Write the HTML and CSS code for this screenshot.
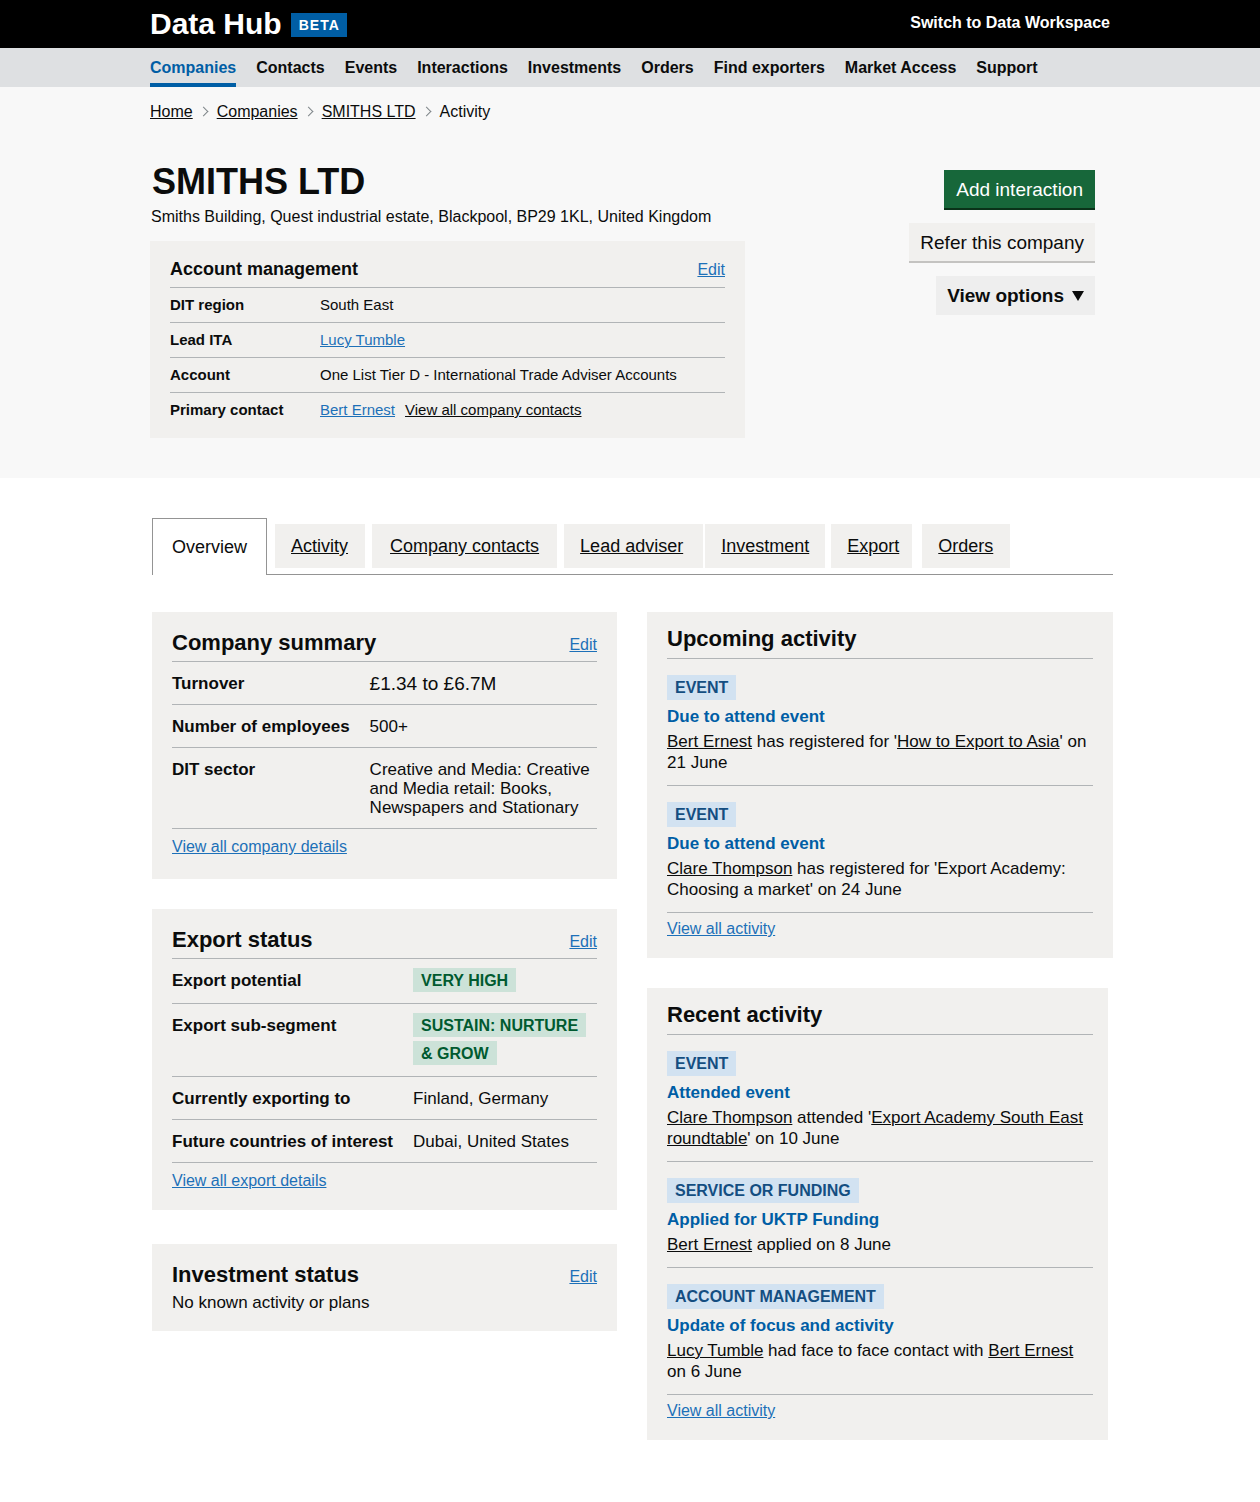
FILE: index.html
```html
<!DOCTYPE html>
<html lang="en">
<head>
<meta charset="utf-8">
<title>SMITHS LTD - Data Hub</title>
<link rel="stylesheet" href="styles.css">
</head>
<body>
<header class="site-header">
  <div class="container header-inner">
    <div class="brand"><span class="brand-name">Data Hub</span><span class="beta">BETA</span></div>
    <a class="switch" href="#">Switch to Data Workspace</a>
  </div>
</header>
<nav class="main-nav">
  <ul class="container nav-list">
    <li><a class="nav-link active" href="#">Companies</a></li>
    <li><a class="nav-link" href="#">Contacts</a></li>
    <li><a class="nav-link" href="#">Events</a></li>
    <li><a class="nav-link" href="#">Interactions</a></li>
    <li><a class="nav-link" href="#">Investments</a></li>
    <li><a class="nav-link" href="#">Orders</a></li>
    <li><a class="nav-link" href="#">Find exporters</a></li>
    <li><a class="nav-link" href="#">Market Access</a></li>
    <li><a class="nav-link" href="#">Support</a></li>
  </ul>
</nav>
<div class="local-header">
  <div class="container">
    <ol class="breadcrumbs">
      <li><a href="#">Home</a></li>
      <li><a href="#">Companies</a></li>
      <li><a href="#">SMITHS LTD</a></li>
      <li>Activity</li>
    </ol>
    <div class="company-head">
      <div class="company-info">
        <h1 class="company-name">SMITHS LTD</h1>
        <p class="address">Smiths Building, Quest industrial estate, Blackpool, BP29 1KL, United Kingdom</p>
        <section class="account-box">
          <div class="box-head"><h2>Account management</h2><a class="link" href="#">Edit</a></div>
          <table class="account-table">
            <tr><th>DIT region</th><td>South East</td></tr>
            <tr><th>Lead ITA</th><td><a class="link" href="#">Lucy Tumble</a></td></tr>
            <tr><th>Account</th><td>One List Tier D - International Trade Adviser Accounts</td></tr>
            <tr><th>Primary contact</th><td><a class="link" href="#">Bert Ernest</a><a class="plain-link contacts-link" href="#">View all company contacts</a></td></tr>
          </table>
        </section>
      </div>
      <div class="actions">
        <a class="btn btn-green" href="#">Add interaction</a>
        <a class="btn btn-grey" href="#">Refer this company</a>
        <button class="btn btn-options" type="button">View options <svg width="12" height="10" viewBox="0 0 12 10" aria-hidden="true"><path d="M0 0H12L6 10Z" fill="#0b0c0c"/></svg></button>
      </div>
    </div>
  </div>
</div>
<main class="container">
  <div class="main-inner">
    <ul class="tabs">
      <li class="tab selected">Overview</li>
      <li class="tab"><a href="#">Activity</a></li>
      <li class="tab"><a href="#">Company contacts</a></li>
      <li class="tab"><a href="#">Lead adviser</a></li>
      <li class="tab"><a href="#">Investment</a></li>
      <li class="tab"><a href="#">Export</a></li>
      <li class="tab"><a href="#">Orders</a></li>
    </ul>
    <div class="cards">
      <div class="col">
        <section class="card card-summary">
          <div class="card-head with-edit"><h2>Company summary</h2><a class="link" href="#">Edit</a></div>
          <table class="kv">
            <tr><th>Turnover</th><td class="big">£1.34 to £6.7M</td></tr>
            <tr><th>Number of employees</th><td>500+</td></tr>
            <tr><th>DIT sector</th><td>Creative and Media: Creative and Media retail: Books, Newspapers and Stationary</td></tr>
          </table>
          <p class="card-foot"><a class="link" href="#">View all company details</a></p>
        </section>
        <section class="card">
          <div class="card-head with-edit"><h2>Export status</h2><a class="link" href="#">Edit</a></div>
          <table class="kv">
            <tr><th>Export potential</th><td class="tags"><span class="tag-green">VERY HIGH</span></td></tr>
            <tr><th>Export sub-segment</th><td class="tags"><span class="tag-green">SUSTAIN: NURTURE &amp; GROW</span></td></tr>
            <tr><th>Currently exporting to</th><td>Finland, Germany</td></tr>
            <tr><th>Future countries of interest</th><td>Dubai, United States</td></tr>
          </table>
          <p class="card-foot"><a class="link" href="#">View all export details</a></p>
        </section>
        <section class="card card-invest">
          <div class="card-head with-edit no-line"><h2>Investment status</h2><a class="link" href="#">Edit</a></div>
          <p class="invest-text">No known activity or plans</p>
        </section>
      </div>
      <div class="col">
        <section class="card">
          <div class="card-head plain"><h2>Upcoming activity</h2></div>
          <div class="activity-item">
            <span class="tag-blue">EVENT</span>
            <h3 class="activity-title">Due to attend event</h3>
            <p class="activity-desc"><a class="plain-link" href="#">Bert Ernest</a> has registered for '<a class="plain-link" href="#">How to Export to Asia</a>' on 21 June</p>
          </div>
          <div class="activity-item">
            <span class="tag-blue">EVENT</span>
            <h3 class="activity-title">Due to attend event</h3>
            <p class="activity-desc"><a class="plain-link" href="#">Clare Thompson</a> has registered for 'Export Academy: Choosing a market' on 24 June</p>
          </div>
          <p class="card-foot activity-foot"><a class="link" href="#">View all activity</a></p>
        </section>
        <section class="card card-recent">
          <div class="card-head plain"><h2>Recent activity</h2></div>
          <div class="activity-item">
            <span class="tag-blue">EVENT</span>
            <h3 class="activity-title">Attended event</h3>
            <p class="activity-desc"><a class="plain-link" href="#">Clare Thompson</a> attended '<a class="plain-link" href="#">Export Academy South East roundtable</a>' on 10 June</p>
          </div>
          <div class="activity-item">
            <span class="tag-blue">SERVICE OR FUNDING</span>
            <h3 class="activity-title">Applied for UKTP Funding</h3>
            <p class="activity-desc"><a class="plain-link" href="#">Bert Ernest</a> applied on 8 June</p>
          </div>
          <div class="activity-item">
            <span class="tag-blue">ACCOUNT MANAGEMENT</span>
            <h3 class="activity-title">Update of focus and activity</h3>
            <p class="activity-desc"><a class="plain-link" href="#">Lucy Tumble</a> had face to face contact with <a class="plain-link" href="#">Bert Ernest</a> on 6 June</p>
          </div>
          <p class="card-foot activity-foot"><a class="link" href="#">View all activity</a></p>
        </section>
      </div>
    </div>
  </div>
</main>
</body>
</html>
```
FILE: styles.css
```css
body {
  margin: 0;
  font-family: "Liberation Sans", Arial, sans-serif;
  color: #0b0c0c;
  background: #fff;
}

.container {
  width: 960px;
  margin: 0 auto;
}

/* Header */
.site-header {
  background: #000;
  height: 48px;
}
.header-inner {
  display: flex;
  justify-content: space-between;
  align-items: center;
  height: 48px;
}
.brand {
  display: flex;
  align-items: center;
}
.brand-name {
  color: #fff;
  font-weight: 700;
  font-size: 30px;
  line-height: 34px;
}
.beta {
  margin: 2px 0 0 9px;
  background: #005ea5;
  color: #fff;
  font-weight: 700;
  font-size: 14px;
  letter-spacing: 1px;
  line-height: 14px;
  padding: 5px 7px 5px 8px;
}
.switch {
  color: #fff;
  font-weight: 700;
  font-size: 16px;
  text-decoration: none;
  margin-top: -2px;
}

/* Nav */
.main-nav {
  background: #dee0e2;
}
.nav-list {
  display: flex;
  gap: 20px;
  list-style: none;
  padding: 0;
  height: 39px;
}
.nav-link {
  display: block;
  padding: 10px 0 5px;
  line-height: 20px;
  border-bottom: 4px solid transparent;
  font-weight: 700;
  font-size: 16px;
  color: #0b0c0c;
  text-decoration: none;
}
.nav-link.active {
  color: #005ea5;
  border-bottom-color: #005ea5;
}

/* Local header */
.local-header {
  background: #f8f8f8;
  padding: 15px 0 40px;
}
.breadcrumbs {
  list-style: none;
  margin: 0;
  padding: 0;
  display: flex;
  align-items: center;
  font-size: 16px;
  line-height: 20px;
}
.breadcrumbs a {
  color: #0b0c0c;
}
.breadcrumbs li + li::before {
  content: "";
  display: inline-block;
  width: 6px;
  height: 6px;
  border-top: 1px solid #7f868a;
  border-right: 1px solid #7f868a;
  transform: rotate(45deg);
  margin: 0 10px 2px 7px;
  vertical-align: middle;
}
.company-head {
  display: flex;
  justify-content: space-between;
  align-items: flex-start;
  margin-top: 40px;
}
.company-info {
  width: 595px;
}
.company-name {
  margin: 0 0 0 2px;
  font-size: 36px;
  line-height: 40px;
  font-weight: 700;
}
.address {
  margin: 5px 0 0 1px;
  font-size: 16px;
  line-height: 20px;
}
.account-box {
  margin-top: 14px;
  background: #f1f0ee;
  padding: 16px 20px 11px;
}
.box-head {
  display: flex;
  justify-content: space-between;
  align-items: baseline;
  padding-bottom: 6px;
  border-bottom: 1px solid #b1b4b6;
}
.box-head h2 {
  margin: 0;
  font-size: 18px;
  line-height: 24px;
  font-weight: 700;
}
.box-head .link {
  font-size: 16px;
}
.account-table {
  width: 100%;
  border-collapse: collapse;
  font-size: 15px;
  line-height: 18px;
}
.account-table th {
  width: 150px;
  text-align: left;
  padding: 8px 0;
  font-weight: 700;
  vertical-align: top;
}
.account-table td {
  padding: 8px 0;
}
.account-table tr + tr {
  border-top: 1px solid #b1b4b6;
}
.contacts-link {
  margin-left: 10px;
}

.link {
  color: #1d70b8;
  text-decoration: underline;
}
.plain-link {
  color: #0b0c0c;
  text-decoration: underline;
}

/* Actions */
.actions {
  display: flex;
  flex-direction: column;
  align-items: flex-end;
  gap: 13px;
  margin: 8px 15px 0 0;
}
.btn {
  font-family: inherit;
  font-size: 19px;
  line-height: 23px;
  text-decoration: none;
  border: 0;
  display: inline-block;
}
.btn-green {
  background: #17673a;
  color: #fff;
  padding: 8px 12px 7px;
  border-bottom: 2px solid #0a3219;
}
.btn-grey {
  background: #f1f0ee;
  color: #0b0c0c;
  padding: 8px 11px 7px;
  border-bottom: 2px solid #c4c3c1;
}
.btn-options {
  background: #eeeeee;
  color: #0b0c0c;
  font-weight: 700;
  padding: 8px 11px;
  display: flex;
  align-items: center;
  gap: 8px;
}

/* Main */
.main-inner {
  margin: 0 -3px 0 2px;
}
.tabs {
  display: flex;
  align-items: flex-end;
  list-style: none;
  margin: 40px 0 0;
  padding: 0;
  border-bottom: 1px solid #949494;
}
.tab {
  background: #f1f0ee;
  height: 44px;
  line-height: 44px;
  padding: 0 16px;
  margin: 0 0 6px 7px;
  font-size: 18px;
}
.tab a {
  color: #0b0c0c;
  text-decoration: underline;
}
.tab.selected {
  background: #fff;
  border: 1px solid #949494;
  border-bottom: 0;
  height: 56px;
  line-height: 56px;
  margin: 0 0 -1px 0;
  padding: 0 19px;
}
.tab:nth-child(2) { margin-left: 8px; padding-right: 17px; }
.tab:nth-child(3) { padding: 0 18px; }
.tab:nth-child(4) { padding-right: 20px; }
.tab:nth-child(5) { margin-left: 2px; }
.tab:nth-child(6) { margin-left: 6px; padding-right: 13px; }
.tab:nth-child(7) { margin-left: 10px; padding-right: 17px; }

.cards {
  display: grid;
  grid-template-columns: 465px 466px;
  column-gap: 30px;
  margin-top: 37px;
  align-items: start;
}
.col {
  display: flex;
  flex-direction: column;
  gap: 30px;
}
.card {
  background: #f1f0ee;
  padding: 0 20px 20px;
}
.card-summary {
  padding-bottom: 23px;
}
.card-recent {
  margin-right: 5px;
  padding-right: 15px;
}
.card-head {
  display: flex;
  justify-content: space-between;
  align-items: baseline;
  border-bottom: 1px solid #b1b4b6;
}
.card-head h2 {
  margin: 0;
  font-size: 22px;
  line-height: 25px;
  font-weight: 700;
}
.card-head .link {
  font-size: 16px;
}
.card-head.with-edit {
  padding: 18px 0 6px;
}
.card-head.plain {
  padding: 14px 0 7px;
}
.card-head.no-line {
  border-bottom: 0;
  padding-bottom: 0;
}

.kv {
  width: 100%;
  border-collapse: collapse;
  font-size: 17px;
  line-height: 19px;
}
.kv tr {
  border-bottom: 1px solid #b1b4b6;
}
.kv th {
  text-align: left;
  font-weight: 700;
  white-space: nowrap;
  padding: 12px 20px 11px 0;
  vertical-align: top;
}
.kv td {
  padding: 12px 0 11px;
  vertical-align: top;
}
.kv td.big {
  font-size: 19px;
}
.kv td.tags {
  padding: 8px 10px 8px 0;
  line-height: 28px;
}
.tag-green {
  background: #cce2d8;
  color: #005a30;
  font-weight: 700;
  font-size: 16px;
  padding: 4px 8px 3px;
  -webkit-box-decoration-break: clone;
  box-decoration-break: clone;
}

.card-foot {
  margin: 0;
  padding-top: 9px;
  font-size: 16px;
  line-height: 18px;
}
.activity-foot {
  padding-top: 7px;
}

.invest-text {
  margin: 6px 0 0;
  font-size: 17px;
  line-height: 20px;
}
.card-invest {
  margin-top: 4px;
  padding-bottom: 18px;
}

.activity-item {
  padding: 16px 0 12px;
  border-bottom: 1px solid #b1b4b6;
}
.tag-blue {
  display: inline-block;
  background: #d2e2f1;
  color: #144e81;
  font-weight: 700;
  font-size: 16px;
  line-height: 16px;
  padding: 5px 8px 4px;
}
.activity-title {
  margin: 7px 0 0;
  font-size: 17px;
  line-height: 20px;
  font-weight: 700;
  color: #005ea5;
}
.activity-desc {
  margin: 4px 0 0;
  font-size: 17px;
  line-height: 21px;
}
```
